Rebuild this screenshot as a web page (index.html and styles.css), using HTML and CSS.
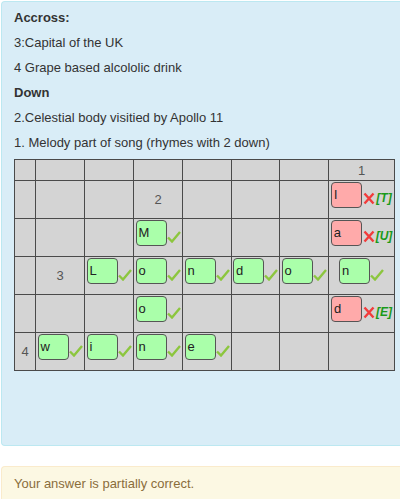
FILE: index.html
```html
<!DOCTYPE html>
<html>
<head>
<meta charset="utf-8">
<link rel="stylesheet" href="styles.css">
</head>
<body>
<div class="formulation">
  <p class="head">Accross:</p>
  <p>3:Capital of the UK</p>
  <p>4 Grape based alcololic drink</p>
  <p class="head">Down</p>
  <p>2.Celestial body visitied by Apollo 11</p>
  <p>1. Melody part of song (rhymes with 2 down)</p>

  <div class="grid">
    <!-- row 0 -->
    <div class="cell"></div><div class="cell"></div><div class="cell"></div><div class="cell"></div><div class="cell"></div><div class="cell"></div><div class="cell"></div>
    <div class="cell num top">1</div>
    <!-- row 1 -->
    <div class="cell"></div><div class="cell"></div><div class="cell"></div>
    <div class="cell num">2</div>
    <div class="cell"></div><div class="cell"></div><div class="cell"></div>
    <div class="cell"><div class="entry"><span class="box bad">l</span><svg class="cross" viewBox="0 0 12 13"><path d="M1.5 1.5 L10.5 11.5 M10.5 1.5 L1.5 11.5"/></svg><span class="fix">[T]</span></div></div>
    <!-- row 2 -->
    <div class="cell"></div><div class="cell"></div><div class="cell"></div>
    <div class="cell"><div class="entry"><span class="box ok">M</span><svg class="tick" viewBox="0 0 14 12"><path d="M1 6.5 L5 10.5 L13 1"/></svg></div></div>
    <div class="cell"></div><div class="cell"></div><div class="cell"></div>
    <div class="cell"><div class="entry"><span class="box bad">a</span><svg class="cross" viewBox="0 0 12 13"><path d="M1.5 1.5 L10.5 11.5 M10.5 1.5 L1.5 11.5"/></svg><span class="fix">[U]</span></div></div>
    <!-- row 3 -->
    <div class="cell"></div>
    <div class="cell num">3</div>
    <div class="cell"><div class="entry"><span class="box ok">L</span><svg class="tick" viewBox="0 0 14 12"><path d="M1 6.5 L5 10.5 L13 1"/></svg></div></div>
    <div class="cell"><div class="entry"><span class="box ok">o</span><svg class="tick" viewBox="0 0 14 12"><path d="M1 6.5 L5 10.5 L13 1"/></svg></div></div>
    <div class="cell"><div class="entry"><span class="box ok">n</span><svg class="tick" viewBox="0 0 14 12"><path d="M1 6.5 L5 10.5 L13 1"/></svg></div></div>
    <div class="cell"><div class="entry"><span class="box ok">d</span><svg class="tick" viewBox="0 0 14 12"><path d="M1 6.5 L5 10.5 L13 1"/></svg></div></div>
    <div class="cell"><div class="entry"><span class="box ok">o</span><svg class="tick" viewBox="0 0 14 12"><path d="M1 6.5 L5 10.5 L13 1"/></svg></div></div>
    <div class="cell"><div class="entry"><span class="box ok">n</span><svg class="tick" viewBox="0 0 14 12"><path d="M1 6.5 L5 10.5 L13 1"/></svg></div></div>
    <!-- row 4 -->
    <div class="cell"></div><div class="cell"></div><div class="cell"></div>
    <div class="cell"><div class="entry"><span class="box ok">o</span><svg class="tick" viewBox="0 0 14 12"><path d="M1 6.5 L5 10.5 L13 1"/></svg></div></div>
    <div class="cell"></div><div class="cell"></div><div class="cell"></div>
    <div class="cell"><div class="entry"><span class="box bad">d</span><svg class="cross" viewBox="0 0 12 13"><path d="M1.5 1.5 L10.5 11.5 M10.5 1.5 L1.5 11.5"/></svg><span class="fix">[E]</span></div></div>
    <!-- row 5 -->
    <div class="cell num">4</div>
    <div class="cell"><div class="entry"><span class="box ok">w</span><svg class="tick" viewBox="0 0 14 12"><path d="M1 6.5 L5 10.5 L13 1"/></svg></div></div>
    <div class="cell"><div class="entry"><span class="box ok">i</span><svg class="tick" viewBox="0 0 14 12"><path d="M1 6.5 L5 10.5 L13 1"/></svg></div></div>
    <div class="cell"><div class="entry"><span class="box ok">n</span><svg class="tick" viewBox="0 0 14 12"><path d="M1 6.5 L5 10.5 L13 1"/></svg></div></div>
    <div class="cell"><div class="entry"><span class="box ok">e</span><svg class="tick" viewBox="0 0 14 12"><path d="M1 6.5 L5 10.5 L13 1"/></svg></div></div>
    <div class="cell"></div><div class="cell"></div><div class="cell"></div>
  </div>
</div>

<div class="outcome">Your answer is partially correct.</div>
</body>
</html>
```

FILE: styles.css
```css
html, body {
  margin: 0;
  padding: 0;
  overflow: hidden;
}
body {
  font-family: "Liberation Sans", Arial, sans-serif;
  font-size: 13px;
  color: #333;
  background: #fff;
  padding-left: 1px;
}
.formulation {
  margin: 1px 0 0 0;
  background: #d9edf7;
  border: 1px solid #bce8f1;
  border-right: 0;
  border-radius: 4px 0 0 4px;
  padding: 7px 0 74px 12px;
}
.formulation p {
  margin: 0 0 7px 0;
  line-height: 18px;
}
.formulation p.head {
  font-weight: bold;
}
.grid {
  display: grid;
  width: max-content;
  grid-template-columns: 20px 48px 48px 48px 48px 47px 48px 65px;
  grid-template-rows: 20px 37px 37px 37px 37px 37px;
  gap: 1px;
  background: #4a4a4a;
  border: 1px solid #4a4a4a;
}
.cell {
  background: #d4d4d4;
  display: flex;
  justify-content: center;
  align-items: flex-start;
}
.cell.num {
  align-items: center;
  color: #555;
}
.cell.top {
  align-items: center;
}
.entry {
  display: flex;
  align-items: flex-end;
  padding-top: 1px;
}
.box {
  box-sizing: border-box;
  width: 31px;
  height: 26px;
  border: 1px solid #555;
  border-radius: 4px;
  padding: 0 2px;
  line-height: 23px;
  font-size: 13px;
  color: #222;
}
.box.ok {
  background: #aaffaa;
}
.box.bad {
  background: #ffaaaa;
}
.tick {
  width: 14px;
  height: 12px;
  margin-bottom: 3px;
  fill: none;
  stroke: #8cc63e;
  stroke-width: 2.4;
}
.cross {
  width: 12px;
  height: 13px;
  margin-bottom: 3px;
  margin-left: 1px;
  fill: none;
  stroke: #f23b3b;
  stroke-width: 2.4;
}
.fix {
  font-style: italic;
  font-weight: bold;
  font-size: 12px;
  color: #1a9a1a;
  margin-bottom: 3px;
  margin-left: 1px;
  line-height: 14px;
}
.outcome {
  margin: 20px 0 0 0;
  background: #fcf8e3;
  border: 1px solid #faebcc;
  border-right: 0;
  border-radius: 4px 0 0 4px;
  color: #8a6d3b;
  padding: 8px 0 20px 12px;
  line-height: 18px;
}
```
